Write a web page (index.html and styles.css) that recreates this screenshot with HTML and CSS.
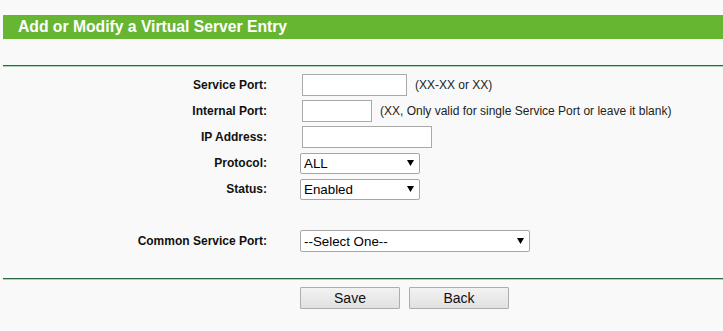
FILE: index.html
```html
<!DOCTYPE html>
<html lang="en">
<head>
  <meta charset="UTF-8">
  <title>Virtual Servers</title>
  <link rel="stylesheet" href="styles.css">
</head>
<body>
  <div class="page">
    <div class="title-bar">Add or Modify a Virtual Server Entry</div>
    <div class="rule"></div>
    <form class="entry-form">
      <label class="field-label">Service Port:</label>
      <div class="field">
        <input type="text" class="txt txt-service">
        <span class="hint">(XX-XX or XX)</span>
      </div>
      <label class="field-label">Internal Port:</label>
      <div class="field">
        <input type="text" class="txt txt-internal">
        <span class="hint">(XX, Only valid for single Service Port or leave it blank)</span>
      </div>
      <label class="field-label">IP Address:</label>
      <div class="field">
        <input type="text" class="txt txt-ip">
      </div>
      <label class="field-label">Protocol:</label>
      <div class="field">
        <select class="sel sel-short">
          <option>ALL</option>
          <option>TCP</option>
          <option>UDP</option>
        </select>
      </div>
      <label class="field-label">Status:</label>
      <div class="field">
        <select class="sel sel-short">
          <option>Enabled</option>
          <option>Disabled</option>
        </select>
      </div>
      <div class="spacer"></div>
      <label class="field-label">Common Service Port:</label>
      <div class="field">
        <select class="sel sel-long">
          <option>--Select One--</option>
          <option>DNS</option>
          <option>FTP</option>
          <option>HTTP</option>
        </select>
      </div>
    </form>
    <div class="rule rule-bottom"></div>
    <div class="actions">
      <button type="button" class="btn">Save</button>
      <button type="button" class="btn">Back</button>
    </div>
  </div>
</body>
</html>
```

FILE: styles.css
```css
body { margin: 0; padding: 0; background: #f9f9f9; font-family: "Liberation Sans", Arial, sans-serif; color: #111; }
.page { margin-left: 3px; padding-top: 15px; }
.title-bar { height: 24px; line-height: 24px; background: #67b631; color: #fff; font-size: 15.7px; font-weight: bold; padding-left: 15px; }
.rule { margin-top: 26px; height: 1px; border-bottom: 1px solid #a9d4b8; background: #2c6a47; }
.rule-bottom { margin-top: 24px; }
.entry-form { display: grid; grid-template-columns: 264px 1fr; grid-auto-rows: 26px; column-gap: 33px; align-items: center; margin-top: 5px; }
.field-label { text-align: right; font-size: 12px; font-weight: bold; color: #111; }
.spacer { grid-column: 1 / 3; }
.field { display: flex; align-items: center; gap: 8px; }
.hint { font-size: 12px; color: #222; }
.txt { box-sizing: border-box; height: 22px; margin: 0 0 0 2px; border: 1px solid #a9a9a9; background: #fff; padding: 0 3px; font-family: inherit; font-size: 13px; }
.txt-service { width: 105px; }
.txt-internal { width: 70px; }
.txt-ip { width: 130px; }
.sel { box-sizing: border-box; height: 21px; margin: 0; border: 1px solid #a6a6a6; border-radius: 2px; background: #fff url("data:image/svg+xml,%3Csvg xmlns='http://www.w3.org/2000/svg' width='7' height='6'%3E%3Cpath d='M0 0H7L3.5 6Z' fill='%23000'/%3E%3C/svg%3E") no-repeat right 5px center; padding: 0 18px 0 3px; font-family: inherit; font-size: 13.33px; color: #000; -webkit-appearance: none; appearance: none; }
.sel-short { width: 120px; }
.sel-long { width: 230px; height: 22px; }
.actions { display: flex; gap: 9px; padding-left: 297px; margin-top: 7px; }
.btn { box-sizing: border-box; width: 100px; height: 22px; margin: 0; border: 1px solid #adadad; border-radius: 1px; background: linear-gradient(#f2f2f2, #e1e1e1); font-family: inherit; font-size: 14px; color: #111; padding: 0; }
```
